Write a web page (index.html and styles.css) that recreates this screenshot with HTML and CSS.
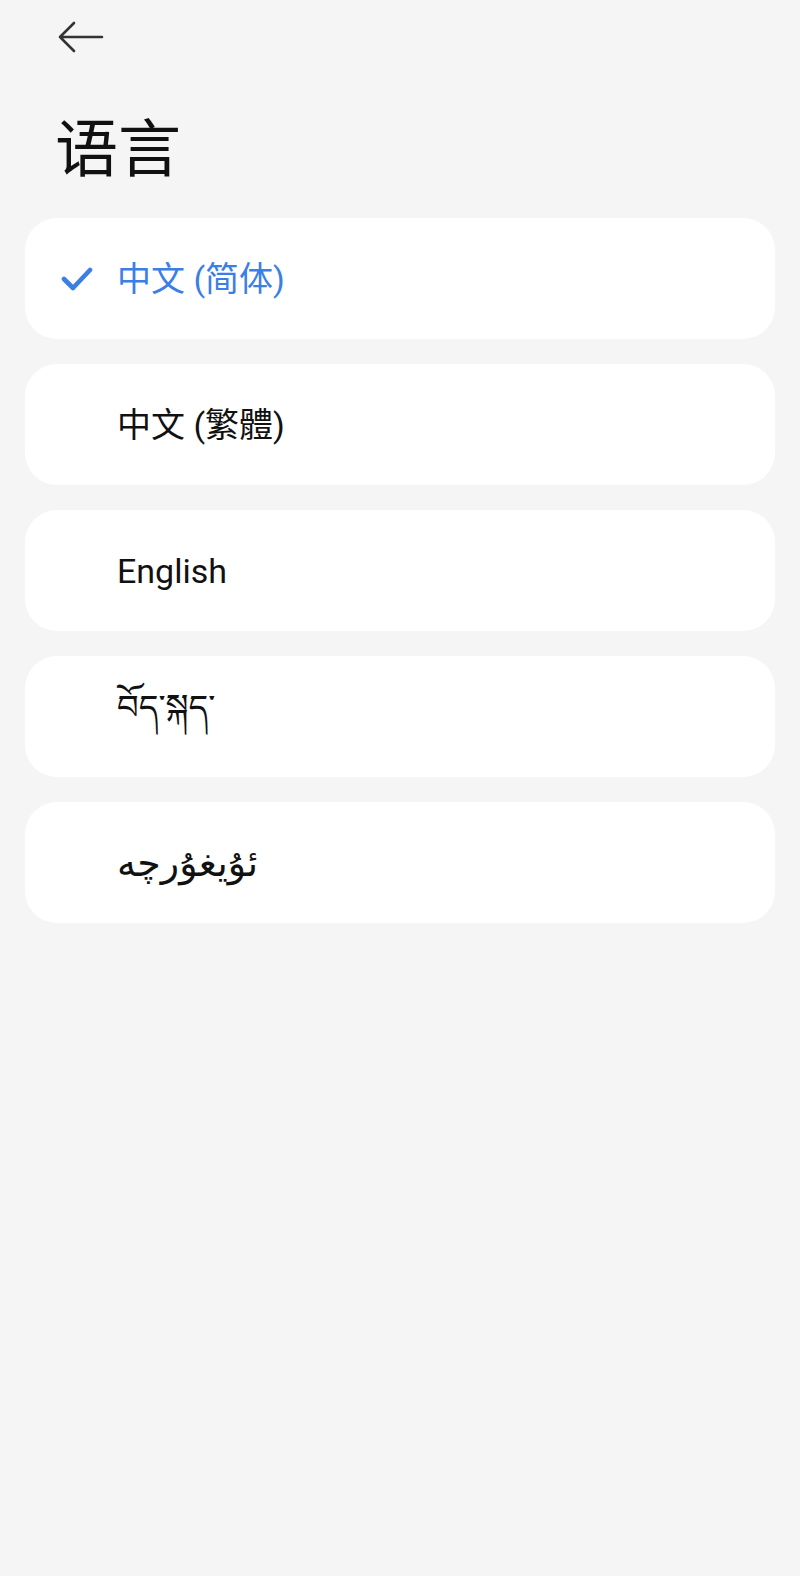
FILE: index.html
```html
<!DOCTYPE html>
<html lang="zh-CN">
<head>
    <meta charset="UTF-8">
    <meta name="viewport" content="width=device-width, initial-scale=1.0">
    <title>语言</title>
    <link rel="stylesheet" href="styles.css">
</head>
<body>

    <div class="topbar">
        <button class="back-btn" aria-label="返回">
            <svg width="48" height="34" viewBox="0 0 48 34">
                <path d="M46 17H4M18 3L4 17L18 31" fill="none" stroke="#333" stroke-width="2.6" stroke-linecap="round" stroke-linejoin="round"/>
            </svg>
        </button>
    </div>

    <h1 class="title">语言</h1>

    <!-- 语言列表 -->
    <ul class="lang-list">
        <li class="lang-item selected">
            <span class="check">
                <svg width="32" height="26" viewBox="0 0 32 26">
                    <path d="M3 13L12 22L29 4" fill="none" stroke="#3b7ee6" stroke-width="4.6" stroke-linecap="round" stroke-linejoin="round"/>
                </svg>
            </span>
            <span class="name">中文 (简体)</span>
        </li>
        <li class="lang-item">
            <span class="check"></span>
            <span class="name" lang="zh-TW">中文 (繁體)</span>
        </li>
        <li class="lang-item">
            <span class="check"></span>
            <span class="name" lang="en">English</span>
        </li>
        <li class="lang-item">
            <span class="check"></span>
            <span class="name tibetan" lang="bo">བོད་སྐད་</span>
        </li>
        <li class="lang-item">
            <span class="check"></span>
            <span class="name uyghur" lang="ug" dir="rtl">ئۇيغۇرچە</span>
        </li>
    </ul>

</body>
</html>
```

FILE: styles.css
```css
body {
    margin: 0;
    padding: 0;
    background-color: #f5f5f5;
    font-family: Roboto, "Noto Sans CJK SC", "Noto Sans", sans-serif;
    color: #111;
}
.topbar {
    height: 76px;
    padding: 0 0 0 56px;
    display: flex;
    align-items: center;
}
.back-btn {
    background: none;
    border: none;
    padding: 0;
    margin-top: -2px;
    cursor: pointer;
    display: flex;
}
.title {
    margin: 0;
    padding: 30px 0 0 55px;
    height: 110px;
    box-sizing: border-box;
    font-size: 63px;
    font-weight: 400;
    line-height: 76px;
    font-family: "Noto Sans CJK SC", sans-serif;
}
.lang-list {
    list-style: none;
    margin: 0;
    padding: 32px 25px 0;
    display: flex;
    flex-direction: column;
    gap: 25px;
}
.lang-item {
    background-color: #fff;
    border-radius: 32px;
    height: 121px;
    display: flex;
    align-items: center;
    padding-left: 36px;
}
.check {
    width: 56px;
    flex: none;
    display: flex;
    align-items: center;
}
.name {
    font-size: 34px;
    line-height: 40px;
}
.name[lang="zh-TW"] {
    font-family: Roboto, "Noto Sans CJK TC", sans-serif;
}
.selected .name {
    color: #3b7ee6;
}
.tibetan {
    font-family: "Noto Sans Tibetan", "Noto Serif Tibetan", "DejaVu Sans", sans-serif;
}
.uyghur {
    font-family: "DejaVu Sans", "Noto Sans", sans-serif;
    font-size: 38px;
}
```
